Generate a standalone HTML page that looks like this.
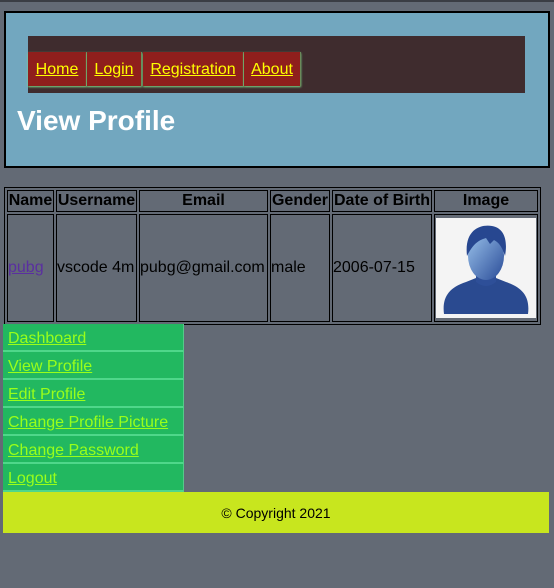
<!DOCTYPE html>
<html><head><style>
body{margin:0;background:#636a75;font-family:"Liberation Sans",sans-serif;width:554px;height:588px;position:relative;overflow:hidden}
a{text-decoration:underline}
.top{position:absolute;left:0;top:0;width:554px;height:2px;background:#3a3d44}
.hdr{position:absolute;left:4px;top:11px;width:542px;height:153px;background:#72a7bf;border:2px solid #000}
.nav{position:absolute;left:22px;top:23px;width:497px;height:57px;background:#3f2c2e}
.nav a{position:absolute;top:16px;height:34px;background:#8f1f1c;color:#ffff00;font-size:16px;line-height:36px;box-shadow:0 1px 2px #7fdc8a;border-right:1px solid #6a8a5a}
h1{position:absolute;left:11px;top:92px;margin:0;color:#fff;font-size:28px;font-weight:bold}
table{position:absolute;left:4px;top:187px;border:1px solid #000;border-spacing:2px;border-collapse:separate}
td,th{border:1px solid #000;padding:0;font-size:16px;color:#000}
th{height:20px}
td{height:104px}
.side{position:absolute;left:3px;top:324px;width:181px}
.side a{display:block;height:26px;background:#22b860;color:#99ff1a;font-size:16px;line-height:30px;padding-left:5px;border-bottom:2px solid #4fd78a;border-right:1px solid #55c98a}
.foot{position:absolute;left:3px;top:492px;width:546px;height:41px;background:#c8e61e;font-size:14px;text-align:center;line-height:42px}
</style></head><body>
<div class="top"></div>
<div class="hdr">
<div class="nav">
<a style="left:0;width:58px;text-align:center">Home</a>
<a style="left:59px;width:54px;text-align:center">Login</a>
<a style="left:115px;width:100px;text-align:center">Registration</a>
<a style="left:216px;width:56px;text-align:center">About</a>
</div>
<h1>View Profile</h1>
</div>
<table>
<tr><th style="width:45px">Name</th><th style="width:79px">Username</th><th style="width:127px">Email</th><th style="width:58px">Gender</th><th style="width:98px">Date of Birth</th><th style="width:101px">Image</th></tr>
<tr><td><a style="color:#5a2fa0">pubg</a></td><td>vscode 4m</td><td>pubg@gmail.com</td><td>male</td><td>2006-07-15</td>
<td style="padding:1px"><svg width="100" height="100" viewBox="0 0 100 100" style="display:block;background:#f4f4f4">
<defs><linearGradient id="g" x1="0" y1="0" x2="1" y2="1"><stop offset="0" stop-color="#9cc4ec"/><stop offset="1" stop-color="#2a4c98"/></linearGradient></defs>
<path d="M8 96 C6 80 12 70 30 64 L40 60 L60 60 L70 64 C88 70 94 80 92 96 Z" fill="#2a4a90"/>
<path d="M40 52 L40 64 Q50 72 60 64 L60 52 Z" fill="#2e4f98"/>
<ellipse cx="50" cy="38" rx="18" ry="24" fill="url(#g)"/>
<path d="M31 38 C28 12 44 6 56 8 C68 10 72 22 69 38 C66 28 62 24 58 22 L54 26 L50 20 C44 22 38 24 31 38 Z" fill="#274790"/>
</svg></td></tr>
</table>
<div class="side">
<a>Dashboard</a><a>View Profile</a><a>Edit Profile</a><a>Change Profile Picture</a><a>Change Password</a><a>Logout</a>
</div>
<div class="foot">© Copyright 2021</div>
</body></html>
